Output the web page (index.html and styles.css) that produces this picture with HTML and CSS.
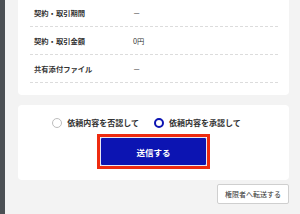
FILE: index.html
```html
<!DOCTYPE html>
<html lang="ja">
<head>
<meta charset="utf-8">
<link rel="stylesheet" href="styles.css">
</head>
<body>
<div class="layout">
  <div class="sidebar"></div>
  <main class="main">
    <section class="card info">
      <div class="row"><div class="label">契約・取引期間</div><div class="value">－</div></div>
      <div class="row"><div class="label">契約・取引金額</div><div class="value">0円</div></div>
      <div class="row"><div class="label">共有添付ファイル</div><div class="value">－</div></div>
    </section>
    <section class="card action">
      <div class="radios">
        <label class="radio"><span class="circle"></span><span class="rlabel">依頼内容を否認して</span></label>
        <label class="radio"><span class="circle checked"></span><span class="rlabel">依頼内容を承認して</span></label>
      </div>
      <div class="focus-ring"><button class="submit">送信する</button></div>
    </section>
    <div class="footer">
      <button class="forward">権限者へ転送する</button>
    </div>
  </main>
</div>
</body>
</html>
```
FILE: styles.css
```css
* { box-sizing: border-box; }
html, body { margin: 0; padding: 0; }
body {
  width: 300px;
  height: 214px;
  overflow: hidden;
  background: #f3f3f3;
  font-family: "Noto Sans CJK JP", "Noto Sans", sans-serif;
  color: #333;
}
.layout { display: flex; height: 214px; }
.sidebar { width: 5px; background: #4b5054; flex: none; }
.main { flex: 1; padding: 0 11px 0 13px; display: flex; flex-direction: column; }
.card { background: #fff; border-radius: 4px; }
.info { margin-top: -11px; padding: 10px 11px 12px 12px; }
.row {
  display: grid;
  grid-template-columns: 99px 1fr;
  align-items: center;
  height: 28px;
  padding: 0 4px;
  border-bottom: 1px dashed #dcdcdc;
  font-size: 7.3px;
}
.label { font-weight: 700; color: #333; }
.value { color: #333; }
.action {
  margin-top: 10px;
  padding: 13px 0 11px;
  display: flex;
  flex-direction: column;
  align-items: center;
}
.radios {
  display: flex;
  align-items: center;
  gap: 15px;
  height: 10px;
  padding-right: 14px;
}
.radio { display: flex; align-items: center; gap: 5px; }
.circle {
  width: 10px; height: 10px;
  border-radius: 50%;
  border: 1px solid #bdbdbd;
  background: #fff;
}
.circle.checked { border: 2.5px solid #0c14b2; }
.rlabel { font-size: 8px; font-weight: 700; color: #333; line-height: 10px; }
.focus-ring {
  margin-top: 6px;
  border: 3px solid #ee2b10;
  display: flex;
}
.submit {
  width: 107px;
  height: 29px;
  background: #0c14b2;
  border: 1px solid #e8e8f4;
  border-radius: 2px;
  color: #fff;
  font-family: inherit;
  font-size: 8.5px;
  font-weight: 700;
  padding: 0;
}
.footer { display: flex; justify-content: flex-end; margin-top: 4px; }
.forward {
  width: 72px;
  height: 20px;
  background: #fff;
  border: 1px solid #cfcfcf;
  border-radius: 2px;
  font-family: inherit;
  font-size: 7px;
  color: #333;
  padding: 0;
}
```
